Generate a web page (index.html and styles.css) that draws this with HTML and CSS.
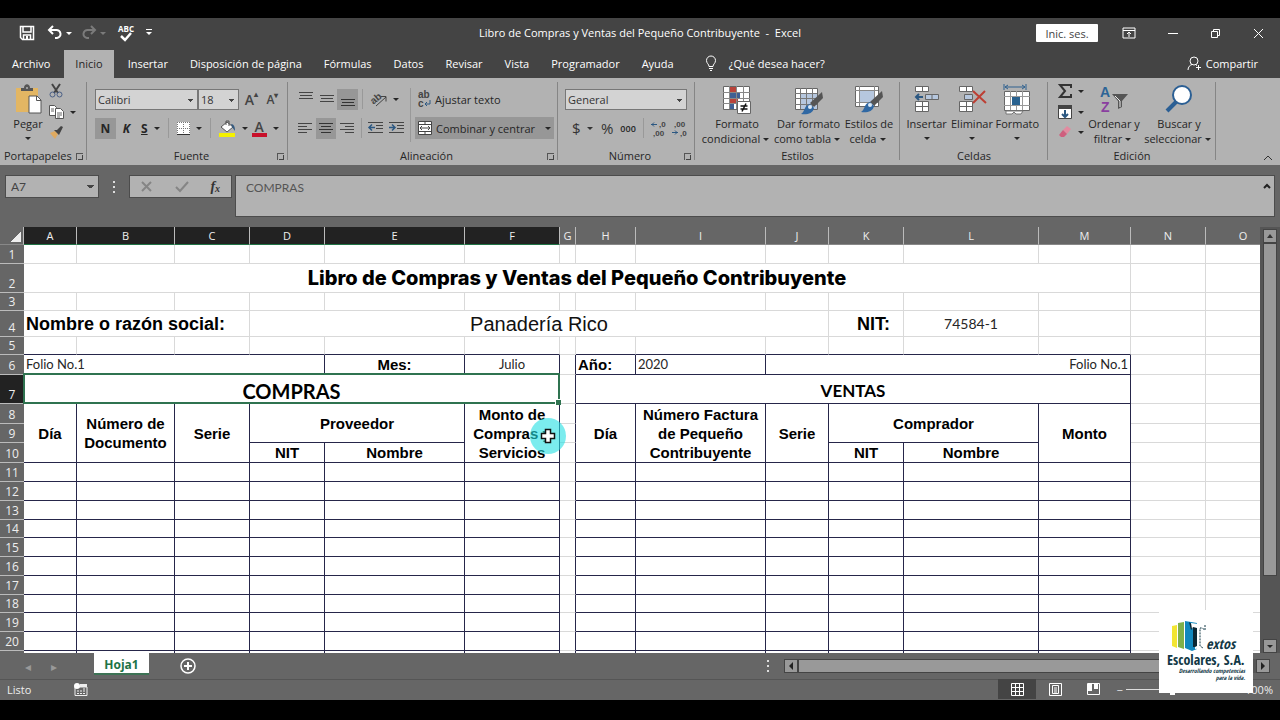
FILE: index.html
```
<!DOCTYPE html>
<html lang="es">
<head>
    <meta charset="UTF-8">
    <title>Libro de Compras y Ventas del Pequeño Contribuyente - Excel</title>
    <link rel="stylesheet" href="styles.css">
</head>
<body>
    <header class="titlebar">
        <div class="quick">
            <button aria-label="Guardar"><svg width="16" height="16" viewBox="0 0 16 16"><path d="M1.500 1.500h13v13h-11l-2-2z" fill="none" stroke="#fff" stroke-width="1.500"/><path d="M4 2v5h8V2M4.500 14v-4h7v4" fill="none" stroke="#fff" stroke-width="1.500"/><path d="M7 11h2v3H7z" fill="#fff"/></svg></button>
            <button aria-label="Deshacer"><svg width="16" height="16" viewBox="0 0 16 16"><path d="M2 5h7a4 4 0 0 1 1 8H8" fill="none" stroke="#fff" stroke-width="2"/><path d="M6 1L2 5l4 4" fill="none" stroke="#fff" stroke-width="2"/></svg><i class="caret"></i></button>
            <button class="off" aria-label="Rehacer"><svg width="16" height="16" viewBox="0 0 16 16"><path d="M14 5H7a4 4 0 0 0-1 8h2" fill="none" stroke="#7b7b7b" stroke-width="2"/><path d="M10 1l4 4-4 4" fill="none" stroke="#7b7b7b" stroke-width="2"/></svg><i class="caret"></i></button>
            <button class="spell" aria-label="Ortografía"><span>ABC</span><svg width="14" height="10" viewBox="0 0 14 10"><path d="M2 4l4 4 6-7" fill="none" stroke="#fff" stroke-width="2.500"/></svg></button>
            <button class="more" aria-label="Personalizar"><i class="caret"></i></button>
        </div>
        <h1>Libro de Compras y Ventas del Pequeño Contribuyente&nbsp; -&nbsp; Excel</h1>
        <div class="window">
            <button class="signin">Inic. ses.</button>
            <button aria-label="Opciones de cinta"><svg width="14" height="12" viewBox="0 0 14 12"><path d="M1 1h12v10H1zM1 3.500h12M7 10V5M5 7l2-2 2 2" fill="none" stroke="#fff"/></svg></button>
            <button aria-label="Minimizar"><svg width="10" height="12" viewBox="0 0 10 12"><path d="M0 6.500h10" stroke="#fff"/></svg></button>
            <button aria-label="Restaurar"><svg width="11" height="11" viewBox="0 0 11 11"><path d="M1.500 3.500h6v6h-6zM3.500 3V1.500h6v6H8" fill="none" stroke="#fff"/></svg></button>
            <button aria-label="Cerrar"><svg width="11" height="11" viewBox="0 0 11 11"><path d="M1 1l9 9M10 1l-9 9" stroke="#fff"/></svg></button>
        </div>
    </header>

    <nav class="tabs">
        <a href="#" class="file">Archivo</a>
        <a href="#" class="active">Inicio</a>
        <a href="#">Insertar</a>
        <a href="#">Disposición de página</a>
        <a href="#">Fórmulas</a>
        <a href="#">Datos</a>
        <a href="#">Revisar</a>
        <a href="#">Vista</a>
        <a href="#">Programador</a>
        <a href="#">Ayuda</a>
        <a href="#" class="tell"><svg width="12" height="16" viewBox="0 0 12 16"><path d="M4 11.500C4 9 1.500 8.500 1.500 5.500a4.500 4.500 0 0 1 9 0C10.500 8.500 8 9 8 11.500zM4 13.500h4M5 15.500h2" fill="none" stroke="#fff"/></svg>¿Qué desea hacer?</a>
        <a href="#" class="share"><svg width="15" height="15" viewBox="0 0 15 15"><circle cx="7" cy="5" r="4" fill="none" stroke="#fff"/><path d="M1 14c0-3 2-5 4-5.500M9 9l1 .5M11.500 9v5M9 11.500h5" fill="none" stroke="#fff"/></svg>Compartir</a>
    </nav>

    <section class="ribbon">
        <div class="group clip">
            <div class="tools">
                <button class="big"><svg width="28" height="32" viewBox="0 0 28 32"><path d="M2 4h22v24H2z" fill="#e3b663"/><path d="M7 7V4h3c0-5 6-5 6 0h3v3z" fill="#555"/><circle cx="13" cy="4" r="1" fill="#b2b2b2"/><path d="M15 12h8l4 4v13H15z" fill="#fff" stroke="#555"/><path d="M22.500 12v4.500H27" fill="none" stroke="#555"/></svg>Pegar<i class="caret"></i></button>
                <div class="stack">
                    <button aria-label="Cortar"><svg width="14" height="14" viewBox="0 0 14 14"><path d="M3 0l6 9M11 0L5 9" stroke="#444" stroke-width="2"/><circle cx="3.500" cy="10.500" r="2.500" fill="none" stroke="#4a5f86"/><circle cx="10.500" cy="10.500" r="2.500" fill="none" stroke="#4a5f86"/></svg></button>
                    <button aria-label="Copiar"><svg width="15" height="14" viewBox="0 0 15 14"><path d="M.5.5h5l2 2v8h-7z" fill="#fff" stroke="#555"/><path d="M6.500 3.500h5l3 3v7h-8z" fill="#fff" stroke="#555"/><path d="M2 4h3M2 6h3M8 8h5M8 10h5M8 12h3" stroke="#666"/></svg><i class="caret"></i></button>
                    <button aria-label="Copiar formato"><svg width="14" height="13" viewBox="0 0 14 13"><path d="M1 7l5-2 3 3-3 5z" fill="#dfaa61"/><path d="M5 4l5 5 1-2 3-6-2-1-4 4z" fill="#444"/></svg></button>
                </div>
            </div>
            <footer>Portapapeles<i class="launch"></i></footer>
        </div>

        <div class="group font">
            <div class="tools rows">
                <div class="row">
                    <select class="face" aria-label="Fuente"><option>Calibri</option></select><select class="size" aria-label="Tamaño"><option>18</option></select>
                    <button class="grow" aria-label="Aumentar fuente">A<sup>▴</sup></button>
                    <button class="grow less" aria-label="Reducir fuente">A<sup>▾</sup></button>
                </div>
                <div class="row">
                    <button class="sq on"><b>N</b></button>
                    <button class="sq"><b><em>K</em></b></button>
                    <button class="sq wide"><b><u>S</u></b><i class="caret"></i></button>
                    <hr>
                    <button class="sq wide" aria-label="Bordes"><svg width="13" height="13" viewBox="0 0 13 13"><path d="M0 0h13v12H0z" fill="#fff"/><path d="M.5 0v12M6.500 0v12M12.500 0v12M0 .5h13M0 6.500h13" stroke="#777" stroke-dasharray="1 1"/><path d="M0 12.500h13" stroke="#333"/></svg><i class="caret"></i></button>
                    <hr>
                    <button class="sq wide" aria-label="Relleno"><svg width="17" height="17" viewBox="0 0 17 17"><path d="M2 7l6-5 6 5-6 5z" fill="#fff" stroke="#555"/><path d="M7 5V1h3v5" fill="none" stroke="#555"/><path d="M12 4c3 0 4 3 4 7l-3-4z" fill="#365b80"/><path d="M0 13h16v4H0z" fill="#f5f100"/></svg><i class="caret"></i></button>
                    <button class="sq wide last" aria-label="Color de fuente"><span class="ink">A</span><i class="caret"></i></button>
                </div>
            </div>
            <footer>Fuente<i class="launch"></i></footer>
        </div>

        <div class="group align">
            <div class="tools">
                <div class="rows">
                    <div class="row">
                        <button class="sq" aria-label="Alinear arriba"><svg width="14" height="14" viewBox="0 0 14 14"><path d="M0 .5h14M1 3.500h12M0 6.500h14" stroke="#444"/></svg></button>
                        <button class="sq" aria-label="Alinear en el medio"><svg width="14" height="14" viewBox="0 0 14 14"><path d="M0 3.500h14M1 6.500h12M0 9.500h14" stroke="#444"/></svg></button>
                        <button class="sq on" aria-label="Alinear abajo"><svg width="14" height="14" viewBox="0 0 14 14"><path d="M0 7.500h14M1 10.500h12M0 13.500h14" stroke="#333"/></svg></button>
                        <hr>
                        <button class="sq wide" aria-label="Orientación"><svg width="16" height="14" viewBox="0 0 16 14"><text x="0" y="10" font-size="10" transform="rotate(-40 5 8)" class="ab">ab</text><path d="M5 14l10-9M10 4.500h5v5" fill="none" stroke="#444"/></svg><i class="caret"></i></button>
                    </div>
                    <div class="row">
                        <button class="sq" aria-label="Izquierda"><svg width="14" height="12" viewBox="0 0 14 12"><path d="M0 1.500h14M0 4.500h9M0 7.500h14M0 10.500h9" stroke="#444"/></svg></button>
                        <button class="sq on" aria-label="Centrar"><svg width="14" height="12" viewBox="0 0 14 12"><path d="M0 1.500h14M2 4.500h10M0 7.500h14M2 10.500h10" stroke="#333"/></svg></button>
                        <button class="sq" aria-label="Derecha"><svg width="14" height="12" viewBox="0 0 14 12"><path d="M0 1.500h14M5 4.500h9M0 7.500h14M5 10.500h9" stroke="#444"/></svg></button>
                        <hr>
                        <button class="sq" aria-label="Disminuir sangría"><svg width="16" height="12" viewBox="0 0 16 12"><path d="M0 .5h15M8 3.500h7M8 6.500h7M0 10.500h15" stroke="#444"/><path d="M7 5.500H1M4 2.500l-3 3 3 3" fill="none" stroke="#2c5882" stroke-width="1.500"/></svg></button>
                        <button class="sq" aria-label="Aumentar sangría"><svg width="16" height="12" viewBox="0 0 16 12"><path d="M0 .5h15M8 3.500h7M8 6.500h7M0 10.500h15" stroke="#444"/><path d="M0 5.500h6M3 2.500l3 3-3 3" fill="none" stroke="#2c5882" stroke-width="1.500"/></svg></button>
                    </div>
                </div>
                <hr class="tall">
                <div class="rows">
                    <button class="line"><svg width="13" height="18" viewBox="0 0 13 18"><text x="0" y="8" font-size="10" class="ab">ab</text><text x="0" y="17" font-size="10" class="ab">c</text><path d="M12 10v4H7M9 12l-2 2 2 2" fill="none" stroke="#2c5882"/></svg>Ajustar texto</button>
                    <button class="line on"><svg width="14" height="14" viewBox="0 0 14 14"><path d="M.5.5h13v13H.5z" fill="#fff" stroke="#444"/><path d="M0 3.500h14M0 10.500h14M7 0v3M7 11v3M2 7h10M4 5L2 7l2 2M10 5l2 2-2 2" fill="none" stroke="#444"/></svg>Combinar y centrar<i class="caret"></i></button>
                </div>
            </div>
            <footer>Alineación<i class="launch"></i></footer>
        </div>

        <div class="group number">
            <div class="tools rows">
                <div class="row"><select class="format" aria-label="Formato de número"><option>General</option></select></div>
                <div class="row figures">
                    <button class="sq wide money">$<i class="caret"></i></button>
                    <button class="sq money">%</button>
                    <button class="sq zeros">000</button>
                    <hr>
                    <button class="sq" aria-label="Aumentar decimales"><svg width="15" height="17" viewBox="0 0 15 17"><path d="M0 4.500h6M3 2.500l-2 2 2 2" fill="none" stroke="#2c5882"/><text x="8" y="7" font-size="8" class="ab">,0</text><text x="2" y="16" font-size="8" class="ab">,00</text></svg></button>
                    <button class="sq" aria-label="Disminuir decimales"><svg width="15" height="17" viewBox="0 0 15 17"><text x="2" y="7" font-size="8" class="ab">,00</text><path d="M0 12.500h6M3 10.500l2 2-2 2" fill="none" stroke="#2c5882"/><text x="8" y="16" font-size="8" class="ab">,0</text></svg></button>
                </div>
            </div>
            <footer>Número<i class="launch"></i></footer>
        </div>

        <div class="group styles">
            <div class="tools">
                <button class="big"><svg width="30" height="32" viewBox="0 0 30 32"><path d="M1.500 2.500h26v23h-26z" fill="#fff" stroke="#666"/><path d="M8 3h6v5H8zM8 14h8v5H8z" fill="#b9433a"/><path d="M8 9h10v5H8zM8 20h4v5H8z" fill="#3f5f94"/><path d="M7.500 2v23M14.500 2v23M21.500 2v23M1 8.500h27M1 14.500h27M1 19.500h27" stroke="#888"/><path d="M15.500 17.500h13v12h-13z" fill="#fff" stroke="#666"/><path d="M18.500 22h7M18.500 25h7M24 19.500l-4 8" stroke="#111" stroke-width="1.500"/></svg><span>Formato<br>condicional<i class="caret"></i></span></button>
                <button class="big"><svg width="30" height="32" viewBox="0 0 30 32"><path d="M1.500 4.500h22v21h-22z" fill="#fff" stroke="#666"/><path d="M7 10h16v15H7z" fill="#b6c7de"/><path d="M6.500 4v21M12.500 4v21M18.500 4v21M1 9.500h22M1 14.500h22M1 20.500h22" stroke="#777"/><path d="M28 8l1 6-9 9-4-4z" fill="#555"/><path d="M7 30c4-2 3-9 9-10l4 4c-1 6-8 7-13 6z" fill="#3068a3"/><circle cx="16" cy="23" r="2" fill="#dce9f6"/></svg><span>Dar formato<br>como tabla<i class="caret"></i></span></button>
                <button class="big"><svg width="30" height="32" viewBox="0 0 30 32"><path d="M1.500 2.500h23v20h-23z" fill="#fff" stroke="#666"/><path d="M6 7h15v12H6z" fill="#b6c7de"/><path d="M5.500 2v20M20.500 2v20M1 6.500h23M1 18.500h23" stroke="#888"/><path d="M28 7l1 6-9 9-4-4z" fill="#555"/><path d="M7 28c4-2 3-9 9-10l4 4c-1 6-8 7-13 6z" fill="#3068a3"/><circle cx="16" cy="21" r="2" fill="#dce9f6"/></svg><span>Estilos de<br>celda<i class="caret"></i></span></button>
            </div>
            <footer>Estilos</footer>
        </div>

        <div class="group cells">
            <div class="tools">
                <button class="big"><svg width="28" height="32" viewBox="0 0 28 32"><path d="M2.500 2.500h13v5h-13zM2.500 17.500h13v10h-13z" fill="#fff" stroke="#666"/><path d="M9.500 2v5M9.500 17v10M2 22.500h13" stroke="#666"/><path d="M12.500 10.500h13v5h-13z" fill="#b6c7de" stroke="#666"/><path d="M19 10v5" stroke="#666"/><path d="M10 13H3M6 10l-3 3 3 3" fill="none" stroke="#2c5882" stroke-width="2"/></svg>Insertar<i class="caret"></i></button>
                <button class="big"><svg width="28" height="32" viewBox="0 0 28 32"><path d="M1.500 2.500h13v5h-13zM1.500 17.500h13v10h-13z" fill="#fff" stroke="#666"/><path d="M8.500 2v5M8.500 17v10M1 22.500h13" stroke="#666"/><path d="M6.500 10.500h8v5h-8z" fill="#b6c7de" stroke="#666"/><path d="M15 7l13 12M27 7L15 19" stroke="#bd3f34" stroke-width="2"/></svg>Eliminar<i class="caret"></i></button>
                <button class="big"><svg width="28" height="32" viewBox="0 0 28 32"><path d="M2 3h20M5 1L2 3l3 2M19 1l3 2-3 2M1 0v6M23 0v6" fill="none" stroke="#2f618f"/><path d="M1.500 7.500h25v19h-25z" fill="#fff" stroke="#666"/><path d="M1 12.500h26M1 21.500h26M7.500 7v19M13.500 7v5M13.500 22v4M19.500 7v19" stroke="#999"/><path d="M9 13h8v8H9z" fill="#28618f"/><path d="M3 27v3h6l2-2 2 2h5l2-3z" fill="#fff" stroke="#777"/></svg>Formato<i class="caret"></i></button>
            </div>
            <footer>Celdas</footer>
        </div>

        <div class="group edit">
            <div class="tools">
                <div class="stack">
                    <button aria-label="Autosuma"><svg width="14" height="14" viewBox="0 0 14 14"><path d="M13 4V1H2l5 6-5 6h11v-3" fill="none" stroke="#333" stroke-width="2"/></svg><i class="caret"></i></button>
                    <button aria-label="Rellenar"><svg width="14" height="14" viewBox="0 0 14 14"><path d="M.5.5h13v13H.5z" fill="#fff" stroke="#444"/><path d="M0 0h14v4H0z" fill="#444"/><path d="M7 5v7M4 9l3 3 3-3" fill="none" stroke="#2c5882" stroke-width="2"/></svg><i class="caret"></i></button>
                    <button aria-label="Borrar"><svg width="14" height="12" viewBox="0 0 14 12"><path d="M5 4l4-4 4 3-4 5z" fill="#e28ba0"/><path d="M5 4l4 4-3 3H3L1 9z" fill="#cf5f7e"/></svg><i class="caret"></i></button>
                </div>
                <button class="big"><svg width="28" height="32" viewBox="0 0 28 32"><text x="0" y="13" font-size="14" class="az" fill="#2c6496">A</text><text x="1" y="28" font-size="14" class="az" fill="#8a3fa0">Z</text><path d="M12 10h16l-6 7v6l-4 2v-8z" fill="#555"/><path d="M15 12l5 5v6" fill="none" stroke="#eee"/></svg><span>Ordenar y<br>filtrar<i class="caret"></i></span></button>
                <button class="big"><svg width="28" height="32" viewBox="0 0 28 32"><path d="M11 18L2 27" stroke="#2b5f94" stroke-width="4"/><circle cx="17" cy="11" r="9" fill="#fff" stroke="#2b5f94" stroke-width="2"/></svg><span>Buscar y<br>seleccionar<i class="caret"></i></span></button>
            </div>
            <footer>Edición</footer>
        </div>
        <button class="collapse" aria-label="Contraer"><svg width="10" height="6" viewBox="0 0 10 6"><path d="M1 5l4-4 4 4" fill="none" stroke="#333"/></svg></button>
    </section>

    <section class="formula">
        <select class="name" aria-label="Cuadro de nombres"><option>A7</option></select>
        <i class="dots"></i>
        <div class="fx">
            <button aria-label="Cancelar"><svg width="12" height="12" viewBox="0 0 12 12"><path d="M1 1l9 9M10 1l-9 9" stroke="#858585" stroke-width="2"/></svg></button>
            <button aria-label="Introducir"><svg width="14" height="12" viewBox="0 0 14 12"><path d="M1 6l4 4 8-9" fill="none" stroke="#858585" stroke-width="2"/></svg></button>
            <button class="f">f<small>x</small></button>
        </div>
        <div class="content"><input type="text" value="COMPRAS" aria-label="Barra de fórmulas"><button aria-label="Contraer barra"><svg width="8" height="5" viewBox="0 0 8 5"><path d="M1 4l3-3 3 3" fill="none" stroke="#222" stroke-width="2"/></svg></button></div>
    </section>

    <main class="work">
        <div class="sheet">
            <table>
                <colgroup>
                    <col class="c-head"><col class="c-a"><col class="c-b"><col class="c-75"><col class="c-75"><col class="c-e"><col class="c-f"><col class="c-g"><col class="c-h"><col class="c-i"><col class="c-j"><col class="c-75"><col class="c-l"><col class="c-m"><col class="c-75"><col class="c-75">
                </colgroup>
                <thead>
                    <tr><th class="corner"></th><th class="sel">A</th><th class="sel">B</th><th class="sel">C</th><th class="sel">D</th><th class="sel">E</th><th class="sel">F</th><th>G</th><th>H</th><th>I</th><th>J</th><th>K</th><th>L</th><th>M</th><th>N</th><th>O</th></tr>
                </thead>
                <tbody id="rows">
                    <tr class="h19"><th>1</th><td></td><td></td><td></td><td></td><td></td><td></td><td></td><td></td><td></td><td></td><td></td><td></td><td></td><td></td><td></td></tr>
                    <tr class="h29"><th>2</th><td colspan="13" class="title">Libro de Compras y Ventas del Pequeño Contribuyente</td><td></td><td></td></tr>
                    <tr class="h18"><th>3</th><td></td><td></td><td></td><td></td><td></td><td></td><td></td><td></td><td></td><td></td><td></td><td></td><td></td><td></td><td></td></tr>
                    <tr class="h26"><th>4</th><td colspan="3" class="label left">Nombre o razón social:</td><td colspan="7" class="company">Panadería Rico</td><td class="label key">NIT:</td><td class="nit">74584-1</td><td></td><td></td><td></td></tr>
                    <tr class="h18 above"><th>5</th><td></td><td></td><td></td><td></td><td></td><td></td><td class="gap"></td><td></td><td></td><td></td><td></td><td></td><td></td><td class="out"></td><td class="out"></td></tr>
                    <tr class="h20 box"><th>6</th><td colspan="4" class="left">Folio No.1</td><td class="head">Mes:</td><td>Julio</td><td class="gap"></td><td class="head left">Año:</td><td class="left">2020</td><td colspan="4" class="right">Folio No.1</td><td class="out"></td><td class="out"></td></tr>
                    <tr class="h29 box"><th class="sel">7</th><td colspan="6" class="compras">COMPRAS</td><td class="gap"></td><td colspan="6" class="ventas">VENTAS</td><td class="out"></td><td class="out"></td></tr>
                    <tr class="h20 box head"><th>8</th><td rowspan="3">Día</td><td rowspan="3">Número de Documento</td><td rowspan="3">Serie</td><td rowspan="2" colspan="2">Proveedor</td><td rowspan="3">Monto de Compras y Servicios</td><td class="gap"></td><td rowspan="3">Día</td><td rowspan="3">Número Factura de Pequeño Contribuyente</td><td rowspan="3">Serie</td><td rowspan="2" colspan="2">Comprador</td><td rowspan="3">Monto</td><td class="out"></td><td class="out"></td></tr>
                    <tr class="h19 box head"><th>9</th><td class="gap"></td><td class="out"></td><td class="out"></td></tr>
                    <tr class="h20 box head"><th>10</th><td>NIT</td><td>Nombre</td><td class="gap"></td><td>NIT</td><td>Nombre</td><td class="out"></td><td class="out"></td></tr>
                </tbody>
            </table>
            <svg class="pointer" width="36" height="36" viewBox="0 0 36 36"><circle cx="18" cy="18" r="18" fill="#23dfe3" opacity=".6"/><path d="M15.500 11.500h5v4h4v5h-4v4h-5v-4h-4v-5h4z" fill="#fff" stroke="#111" stroke-width="1.500"/></svg>
        </div>
        <div class="vscroll">
            <button aria-label="Subir"><i class="caret up"></i></button>
            <div class="thumb"></div>
            <button aria-label="Bajar"><i class="caret"></i></button>
        </div>
    </main>

    <section class="sheets">
        <button class="arrow" aria-label="Anterior">◂</button>
        <button class="arrow" aria-label="Siguiente">▸</button>
        <button class="sheet-tab">Hoja1</button>
        <button class="add" aria-label="Hoja nueva"><svg width="16" height="16" viewBox="0 0 16 16"><circle cx="8" cy="8" r="7" fill="none" stroke="#fff" stroke-width="1.500"/><path d="M8 4v8M4 8h8" stroke="#fff" stroke-width="2"/></svg></button>
        <i class="dots"></i>
        <div class="hscroll"><button aria-label="Izquierda"><i class="caret west"></i></button><div class="thumb"></div><button aria-label="Derecha"><i class="caret east"></i></button></div>
    </section>

    <footer class="status">
        <span>Listo</span>
        <svg width="14" height="13" viewBox="0 0 14 13"><path d="M1 4h12v8.500H1z" fill="none" stroke="#eee"/><path d="M6 1h7v3H6z" fill="#eee"/><circle cx="3" cy="3" r="3" fill="#fff"/><path d="M3 8h2M6 8h2M9 8h2M3 10.500h2M6 10.500h2M9 10.500h2M9 6h2" stroke="#eee"/></svg>
        <div class="views">
            <button class="on" aria-label="Normal"><svg width="13" height="13" viewBox="0 0 13 13"><path d="M.5.5h12v12H.5zM4.500 0v13M8.500 0v13M0 4.500h13M0 8.500h13" fill="none" stroke="#fff"/></svg></button>
            <button aria-label="Diseño de página"><svg width="13" height="13" viewBox="0 0 13 13"><path d="M.5.5h12v12H.5zM3.500 2.500h6v8h-6zM5 5h3M5 7h3M5 9h3" fill="none" stroke="#fff"/></svg></button>
            <button aria-label="Salto de página"><svg width="13" height="13" viewBox="0 0 13 13"><path d="M.5.5h12v11H.5z" fill="none" stroke="#fff"/><path d="M1 1h4v7H1zM7 1h4v5H7z" fill="#fff"/></svg></button>
            <label class="zoom"><span>−</span><input type="range" min="10" max="190" value="100" aria-label="Zoom"><span>+</span></label>
            <span class="percent">100%</span>
        </div>
    </footer>

    <aside class="logo">
        <div class="brand">
            <svg width="34" height="32" viewBox="0 0 34 32"><path d="M0 6l5-1v23l-5-2z" fill="#f3e532"/><path d="M6 3l6-1v27l-6-2z" fill="#7fb04a"/><path d="M13 1l12 2v26l-5 2-7-3z" fill="#1187bd"/><path d="M17 2l2 8 2-2v19h4V8z" fill="#0b2733"/><path d="M19 3l14 2v5l-3-2h-2v18l3 2-8 1v-2l2-1V8l-4-1-1 2z" fill="#fff"/><path d="M33 5v5l-3-2h-2v18l3 2" fill="none" stroke="#123846" stroke-dasharray="2 1"/></svg>
            <span>extos</span>
        </div>
        <strong>Escolares, S.A.</strong>
        <small>Desarrollando competencias<br>para la vida.</small>
    </aside>

    <script>
        // empty rows of the book, 11 onwards
        const rows = document.getElementById("rows");
        for (let n = 11; n <= 21; n++) {
            const tr = document.createElement("tr");
            tr.className = "box " + (n == 14 || n == 18 ? "h18" : "h19");
            let cells = "<th>" + n + "</th>";
            for (let c = 0; c < 15; c++) {
                let name = c == 6 ? "gap" : c > 12 ? "out" : "";
                cells += '<td class="' + name + '"></td>';
            }
            tr.innerHTML = cells;
            rows.appendChild(tr);
        }
    </script>
</body>
</html>
```
FILE: styles.css
```
* {
    box-sizing: border-box;
}

body {
    margin: 0;
    padding: 18px 0 20px;
    height: 100vh;
    display: flex;
    flex-direction: column;
    overflow: hidden;
    position: relative;
    background: #000;
    font-family: "Open Sans", "Noto Sans", sans-serif;
    font-size: 11px;
    color: #262626;
}

button {
    background: none;
    border: none;
    padding: 0;
    margin: 0;
    font: inherit;
    color: inherit;
    display: flex;
    align-items: center;
    justify-content: center;
}

a {
    color: inherit;
    text-decoration: none;
}

svg {
    flex: none;
    overflow: visible;
}

hr {
    width: 1px;
    height: 20px;
    margin: 0 4px;
    border: none;
    background: #999;
}

.caret {
    flex: none;
    display: inline-block;
    border: 3px solid transparent;
    border-top-color: currentColor;
    border-bottom: none;
    margin: 2px 3px;
}

.caret.up {
    border-top: none;
    border-bottom: 4px solid #333;
}

.caret.west {
    border: 4px solid transparent;
    border-left: none;
    border-right-color: #222;
}

.caret.east {
    border: 4px solid transparent;
    border-right: none;
    border-left-color: #222;
}

/* title bar and tabs */
.titlebar {
    height: 32px;
    flex: none;
    display: grid;
    grid-template-columns: 1fr auto 1fr;
    align-items: center;
    padding-bottom: 2px;
    background: #444;
    color: #fff;
}

.titlebar h1 {
    margin: 0;
    font-size: 11px;
    line-height: 14px;
    font-weight: normal;
}

.quick {
    display: flex;
    gap: 6px;
    padding-left: 19px;
}

.quick button:nth-child(2) {
    margin-left: 6px;
}

.quick .off {
    color: #7b7b7b;
}

.spell {
    flex-direction: column;
    width: 22px;
}

.spell span {
    font-size: 8px;
    line-height: 7px;
    font-weight: bold;
}

.more .caret {
    position: relative;
}

.more .caret::before {
    content: "";
    position: absolute;
    left: -3px;
    top: -6px;
    width: 6px;
    height: 1px;
    background: #fff;
}

.window {
    display: flex;
    justify-content: flex-end;
    align-items: center;
    gap: 32px;
    padding-right: 16px;
}

.window .signin {
    width: 62px;
    height: 18px;
    margin-right: -8px;
    background: #fff;
    color: #444;
    border-radius: 1px;
}

.tabs {
    height: 28px;
    flex: none;
    display: flex;
    background: #444;
    color: #fff;
}

.tabs a {
    display: flex;
    align-items: center;
    padding: 0 11px 2px;
}

.tabs .file {
    padding-left: 12px;
    padding-right: 14px;
}

.tabs .active {
    margin-right: 3px;
    background: #b2b2b2;
    color: #262626;
}

.tabs .tell {
    gap: 12px;
    padding-left: 20px;
}

.tabs .share {
    margin-left: auto;
    gap: 4px;
    padding-right: 22px;
}

/* ribbon */
.ribbon {
    height: 87px;
    flex: none;
    display: flex;
    background: #b2b2b2;
    position: relative;
}

.group {
    display: flex;
    flex-direction: column;
    flex: none;
    position: relative;
    padding-top: 6px;
}

.group::after {
    content: "";
    position: absolute;
    right: 0;
    top: 4px;
    bottom: 5px;
    width: 1px;
    background: #858585;
}

.group footer {
    height: 16px;
    margin-bottom: 2px;
    display: flex;
    align-items: center;
    justify-content: center;
    position: relative;
}

.launch {
    position: absolute;
    right: 4px;
    top: 6px;
    width: 7px;
    height: 7px;
    border-left: 1px solid #555;
    border-top: 1px solid #555;
}

.launch::after {
    content: "";
    position: absolute;
    right: 0;
    bottom: 0;
    width: 4px;
    height: 4px;
    border-right: 1px solid #444;
    border-bottom: 1px solid #444;
}

.tools {
    flex: 1;
    display: flex;
}

.rows {
    display: flex;
    flex-direction: column;
    gap: 7px;
    padding-top: 4px;
}

.row {
    display: flex;
    align-items: center;
    height: 22px;
}

.clip { width: 87px; }
.font { width: 201px; padding-left: 8px; }
.align { width: 270px; padding-left: 7px; }
.number { width: 137px; padding-left: 7px; }
.styles { width: 205px; }
.cells { width: 148px; }
.edit { width: 168px; }

.clip footer {
    justify-content: flex-start;
    padding-left: 4px;
}

.big {
    flex-direction: column;
    justify-content: flex-start;
    line-height: 15px;
    flex: 1;
    white-space: nowrap;
}

.big > .caret {
    margin-top: 6px;
}

.styles .tools {
    padding: 0 6px;
}

.styles .big,
.edit .big {
    flex: auto;
}

.cells .tools {
    padding: 0 8px 0 4px;
}

.clip .tools {
    padding-left: 7px;
}

.stack {
    display: flex;
    flex-direction: column;
    align-items: flex-start;
    gap: 7px;
    width: 38px;
}

.stack .caret {
    margin-left: 6px;
}

.edit .stack {
    padding-left: 10px;
}

.sq {
    width: 21px;
    height: 21px;
}

.sq.wide {
    width: auto;
    padding: 0 4px;
}

.sq.wide.last {
    padding: 0;
}

.sq.wide .caret {
    margin-left: 6px;
    margin-right: 0;
}

.on {
    background: #979797;
}

select {
    appearance: none;
    height: 21px;
    border: 1px solid #777;
    border-radius: 0;
    padding: 0 2px;
    font: inherit;
    color: #333;
    background-color: #d3d3d3;
    background-image: linear-gradient(#444, #444), linear-gradient(#444, #444), linear-gradient(#444, #444);
    background-repeat: no-repeat;
    background-size: 5px 1px, 3px 1px, 1px 1px;
    background-position: right 4px top 9px, right 5px top 10px, right 6px top 11px;
}

.face { width: 103px; }
.size { width: 41px; }
.format { width: 122px; }

.grow {
    width: 21px;
    font-size: 14px;
    font-weight: 600;
    color: #444;
}

.grow.less {
    font-size: 12px;
}

.row > .size + .grow {
    margin-left: 2px;
}

.grow sup {
    font-size: 8px;
    line-height: 8px;
    align-self: flex-start;
}

.sq b {
    font-size: 12px;
}

.ink {
    width: 15px;
    height: 17px;
    line-height: 14px;
    font-size: 14px;
    font-weight: 600;
    border-bottom: 4px solid #c8102a;
    text-align: center;
    color: #444;
}

.ab {
    font-family: "Liberation Sans", sans-serif;
    font-weight: bold;
    fill: #444;
}

.az {
    font-family: "Liberation Sans", sans-serif;
    font-weight: bold;
}

.tall {
    height: 54px;
    margin: 4px 4px 0 3px;
}

.align .tools > .rows:first-child {
    width: 112px;
}

.line {
    height: 22px;
    justify-content: flex-start;
    gap: 4px;
    padding: 0 3px;
}

.line .caret {
    margin-left: 6px;
    margin-right: 0;
}

.figures {
    padding-left: 3px;
}

.money {
    font-size: 15px;
    color: #333;
}

.zeros {
    font-size: 9px;
    font-weight: 600;
}

.collapse {
    position: absolute;
    right: 7px;
    bottom: 4px;
}

/* formula bar */
.formula {
    height: 62px;
    flex: none;
    display: flex;
    align-items: flex-start;
    padding: 10px 5px 0;
    background: #666;
}

.formula .name {
    width: 94px;
    height: 23px;
    padding: 0 5px;
    border-color: #4c4c4c;
    background-color: #b2b2b2;
    background-size: 7px 1px, 5px 1px, 3px 1px;
    font: 12px Lato, sans-serif;
    color: #444;
}

.dots {
    width: 2px;
    height: 12px;
    background: repeating-linear-gradient(#ddd 0 2px, transparent 2px 5px);
}

.formula .dots {
    margin: 6px 14px;
}

.fx {
    width: 103px;
    height: 23px;
    display: flex;
    justify-content: space-around;
    margin-right: 3px;
    background: #b2b2b2;
    border: 1px solid #4c4c4c;
}

.fx .f {
    font: italic bold 14px "Liberation Serif", serif;
    color: #333;
}

.fx small {
    font-size: 10px;
    padding-top: 4px;
}

.content {
    flex: 1;
    height: 42px;
    display: flex;
    align-items: flex-start;
    background: #b2b2b2;
    border: 1px solid #4c4c4c;
}

.content input {
    flex: 1;
    height: 23px;
    padding: 0 10px;
    border: none;
    background: none;
    font: 12px Lato, sans-serif;
    color: #555;
}

.content button {
    padding: 8px 3px;
}

/* sheet */
.work {
    flex: 1;
    min-height: 0;
    display: flex;
    background: #666;
}

.sheet {
    flex: 1;
    min-width: 0;
    overflow: hidden;
    position: relative;
    background: #fff;
}

table {
    width: 1281px;
    table-layout: fixed;
    border-collapse: separate;
    border-spacing: 0;
}

.c-head { width: 24px; }
.c-a { width: 53px; }
.c-b { width: 98px; }
.c-75 { width: 75px; }
.c-e { width: 140px; }
.c-f { width: 95px; }
.c-g { width: 16px; }
.c-h { width: 60px; }
.c-i { width: 130px; }
.c-j { width: 63px; }
.c-l { width: 135px; }
.c-m { width: 92px; }

th {
    padding: 0;
    background: #666;
    color: #eee;
    font-size: 12px;
    line-height: 16px;
    font-weight: normal;
    border-right: 1px solid #bbb;
    border-bottom: 1px solid #bbb;
    vertical-align: bottom;
}

thead th {
    height: 18px;
    vertical-align: middle;
    font-size: 11px;
    border-bottom-color: #888;
}

tbody th {
    border-right: none;
}

th.sel {
    background: #222;
}

thead th.sel {
    border-bottom-color: #217346;
}

.corner {
    background: linear-gradient(135deg, #666 50%, #eee 50%) no-repeat 10px 4px / 11px 11px #666;
}

td {
    padding: 0 2px;
    font: 13px/17px Lato, sans-serif;
    text-align: center;
    border-right: 1px solid #d9d9d9;
    border-bottom: 1px solid #d9d9d9;
    overflow: hidden;
}

.h18 { height: 18px; }
.h19 { height: 19px; }
.h20 { height: 20px; }
.h26 { height: 26px; }
.h29 { height: 29px; }

.box td {
    border-color: #26264a;
}

.above td {
    border-bottom-color: #26264a;
}

.box td.out,
.above td.out,
.above td.gap {
    border-color: #d9d9d9;
}

.box td.gap {
    border-bottom-color: #d9d9d9;
}

td.left { text-align: left; }
td.right { text-align: right; }

.title {
    font: 800 20px/26px Inter, sans-serif;
    color: #000;
}

.label {
    font: bold 18px/24px "Liberation Sans", sans-serif;
    color: #000;
}

.key {
    text-align: right;
    padding-right: 13px;
}

.company {
    font: 20px/24px "Liberation Sans", sans-serif;
    color: #111;
}

.nit {
    font-size: 14px;
}

.head td,
td.head {
    font: bold 15px/19px "Liberation Sans", sans-serif;
    color: #000;
}

.compras {
    font: bold 20px/24px Lato, sans-serif;
    vertical-align: bottom;
    position: relative;
    overflow: visible;
    color: #000;
}

.compras::before {
    content: "";
    position: absolute;
    inset: -2px -1px -1px -1px;
    border: 2px solid #2f7350;
}

.compras::after {
    content: "";
    position: absolute;
    right: -2px;
    bottom: -2px;
    width: 5px;
    height: 5px;
    background: #2f7350;
    border: 1px solid #fff;
    border-width: 1px 0 0 1px;
}

.ventas {
    font: bold 17px/24px Lato, sans-serif;
    vertical-align: bottom;
    color: #000;
}

.pointer {
    position: absolute;
    left: 530px;
    top: 191px;
}

.vscroll {
    width: 20px;
    display: flex;
    flex-direction: column;
    padding: 2px 3px 0;
    background: #555;
}

.vscroll button,
.hscroll button {
    width: 14px;
    height: 14px;
    background: #999;
    border: 1px solid #444;
    flex: none;
}

.vscroll .thumb {
    height: 333px;
    margin-bottom: auto;
    background: #999;
    border: 1px solid #444;
}

/* bottom bars */
.sheets {
    height: 27px;
    flex: none;
    display: flex;
    align-items: center;
    background: #666;
    border-bottom: 1px solid #555;
}

.arrow {
    width: 26px;
    color: #999;
    font-size: 12px;
}

.arrow:first-child {
    margin-left: 15px;
}

.sheet-tab {
    align-self: flex-start;
    width: 55px;
    height: 22px;
    margin-left: 27px;
    padding-top: 3px;
    background: #fff;
    color: #217346;
    font-size: 12px;
    font-weight: bold;
    border-bottom: 2px solid #3d7355;
}

.add {
    margin-left: 31px;
}

.sheets .dots {
    margin-left: auto;
    margin-right: 15px;
}

.hscroll {
    width: 38%;
    margin-right: 10px;
    display: flex;
    background: #555;
}

.hscroll .thumb {
    flex: 1;
    margin-right: 20px;
    background: #999;
    border: 1px solid #444;
}

.status {
    height: 20px;
    flex: none;
    display: flex;
    align-items: center;
    gap: 43px;
    padding: 0 7px 2px;
    background: #666;
    color: #eee;
}

.views {
    margin-left: auto;
    display: flex;
    align-items: center;
}

.views button {
    width: 38px;
    height: 20px;
}

.views .on {
    background: #444;
}

.zoom {
    display: flex;
    align-items: center;
    gap: 3px;
    margin-left: 4px;
}

.zoom input {
    appearance: none;
    width: 94px;
    height: 1px;
    margin: 0;
    background: #ddd;
}

.zoom input::-webkit-slider-thumb {
    appearance: none;
    width: 5px;
    height: 11px;
    background: #fff;
}

.percent {
    margin-left: 16px;
}

/* logo over the sheet corner */
.logo {
    position: absolute;
    right: 27px;
    bottom: 27px;
    width: 94px;
    height: 83px;
    padding: 10px 8px 0;
    display: flex;
    flex-direction: column;
    background: #fff;
    color: #123846;
    font-family: "Liberation Sans Narrow", "Open Sans Condensed", "Liberation Sans", sans-serif;
    white-space: nowrap;
}

.brand {
    display: flex;
    align-items: flex-end;
    padding-left: 5px;
    font-size: 14px;
    line-height: 16px;
    font-weight: bold;
    font-style: italic;
}

.logo strong {
    font-size: 14px;
    line-height: 16px;
}

.logo small {
    font-size: 6px;
    line-height: 7px;
    text-align: right;
    font-style: italic;
}
```
